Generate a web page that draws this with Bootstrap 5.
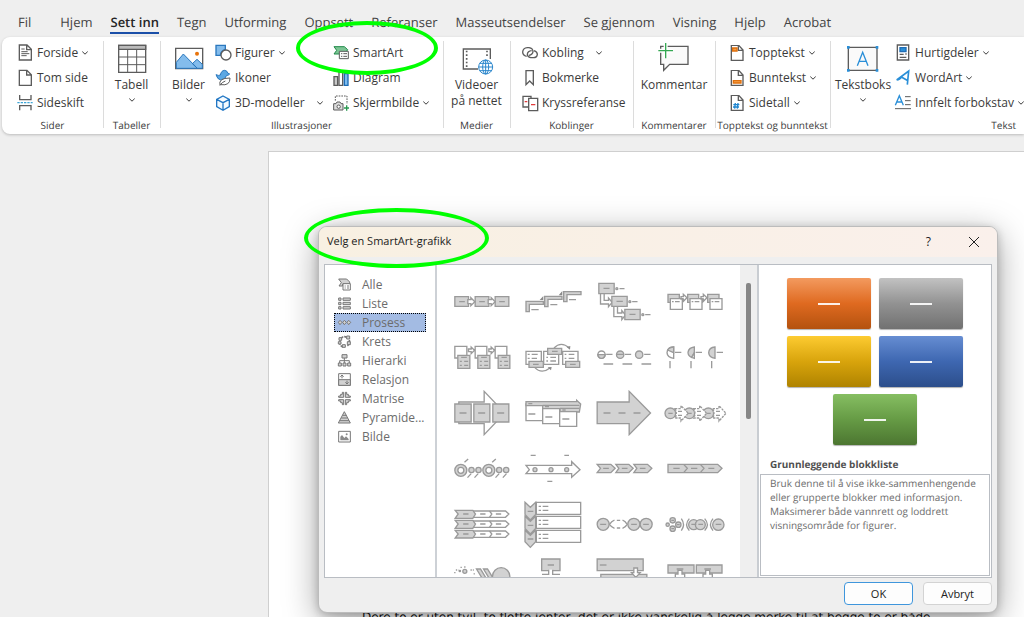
<!DOCTYPE html>
<html lang="nb">
<head>
<meta charset="utf-8">
<meta name="viewport" content="width=device-width, initial-scale=1">
<title>Velg en SmartArt-grafikk</title>
<link href="https://cdn.jsdelivr.net/npm/bootstrap@5.3.0/dist/css/bootstrap.min.css" rel="stylesheet">
<style>
  body { background: #efefef; color: #3b3b3b; font-family: "Open Sans", "Noto Sans", sans-serif; font-size: 12px; line-height: 16px; height: 100vh; text-rendering: geometricPrecision; }
  button { font: inherit; color: inherit; background: none; border: 0; padding: 0; }
  svg { overflow: visible; flex: none; display: block; }

  .tabs { height: 37px; padding: 11px 0 0 18px; gap: 18px; font-size: 13px; }
  .tabs a { color: #444; text-decoration: none; line-height: 22px; height: 23px; white-space: nowrap; }
  .tabs li:first-child { margin-right: 11px; }
  .tabs a.active { color: #262626; font-weight: 600; border-bottom: 2px solid #1b4fa8; }

  .ribbon { background: #fff; margin-left: 2px; height: 97px; border-radius: 8px 0 0 8px; box-shadow: 0 1px 3px rgba(0,0,0,.22); }
  .group { flex: none; padding-top: 3px; position: relative; }
  .group + .group::before { content: ""; position: absolute; left: 0; top: 4px; bottom: 6px; width: 1px; background: #dcdcdc; }
  .group-body { height: 75px; }
  .caption { font-size: 10px; line-height: 20px; text-align: center; white-space: nowrap; }
  .cmd { display: flex; align-items: center; height: 25px; gap: 4px; white-space: nowrap; }
  .cmd .far { margin-left: 8px; }
  .big { display: flex; flex-direction: column; align-items: center; padding-top: 3px; height: 75px; text-align: center; white-space: nowrap; }
  .big span { margin-top: 2px; }
  .big .chev { margin-top: 5px; }
  .chev { width: 6px; height: 4px; fill: none; stroke: #3b3b3b; stroke-width: 1; }
  .w-sider { width: 101px; } .w-tabell { width: 57px; } .w-illu { width: 283px; } .w-medier { width: 67px; }
  .w-kobl { width: 123px; } .w-komm { width: 82px; } .w-topp { width: 115px; }
  .w-tekst { flex: 1 1 0; min-width: 0; }
  .col-a { width: 118px; }
  .big-w { width: 57px; }
  .ico { width: 16px; height: 16px; fill: none; stroke: #5c5c5c; stroke-width: 4; }
  .ico-lg { width: 32px; height: 32px; fill: none; stroke: #5c5c5c; stroke-width: 4; }

  .sheet { margin: 17px 0 0 268px; background: #fff; border: solid #cfcfcf; border-width: 1px 0 0 1px; padding: 456px 0 0 93px; font-family: "DejaVu Sans", sans-serif; color: #111; line-height: 18px; white-space: nowrap; }

  .smart { position: absolute; left: 318px; right: 26px; top: 226px; background: #efefef; border: 1px solid #bcbcbc; border-radius: 9px; overflow: hidden; padding-bottom: 7px; }
  .smart-shadow { box-shadow: 0 8px 34px rgba(0,0,0,.36), 0 2px 8px rgba(0,0,0,.2); }
  .smart-head { height: 30px; background: linear-gradient(90deg, #f8f0e2, #faf0eb); padding: 0 18px 0 8px; color: #1c1c1c; font-size: 11px; }
  .smart-head .btns { gap: 38px; font-size: 12px; }
  .panes { margin: 7px 5px 0; height: 314px; background: #fff; border: 1px solid #b9bdc3; }
  .kinds { width: 112px; padding: 10px 9px 0 9px; border-right: 2px solid #cdd1d6; font-size: 12px; color: #6c6c6c; }
  .kinds button { display: flex; align-items: center; height: 19px; width: 92px; padding-left: 3px; gap: 11px; border: 1px dotted transparent; white-space: nowrap; text-align: left; }
  .kinds button.active { background: #a3bbe3; border: 1px dotted #000; }
  .kinds svg { width: 13px; height: 13px; fill: none; stroke: #777; stroke-width: 3; }
  .gallery { display: grid; grid-template-columns: repeat(4, 1fr); grid-auto-rows: 56px; padding: 8px 9px 0; overflow: hidden; }
  .gallery button { display: flex; justify-content: center; }
  .gallery svg { width: 70px; height: 56px; fill: none; stroke: #9a9a9a; stroke-width: 4; }
  .f { fill: #d2d2d2; } .w { fill: #fff; }
  .k { fill: #8a8a8a; stroke: none; }
  .bar { width: 17px; background: #efefef; padding: 18px 0 0 6px; }
  .thumb { width: 5px; height: 136px; background: #868686; border-radius: 2px; }
  .preview { width: 234px; border-left: 2px solid #c9cdd2; padding: 13px 1px 1px; }
  .blocks { display: flex; flex-wrap: wrap; justify-content: center; gap: 7px 8px; padding: 0 26px; }
  .block-item { width: 84px; height: 51px; border-radius: 2px; display: flex; align-items: center; justify-content: center; box-shadow: 0 1px 1px rgba(0,0,0,.3); }
  .block-item::after { content: ""; width: 22px; height: 2px; background: #fff; opacity: .9; }
  .b1 { background: linear-gradient(#f39a5f, #df6a20 50%, #b4520f); }
  .b2 { background: linear-gradient(#c2c2c2, #929292 50%, #717171); }
  .b3 { background: linear-gradient(#fdcb31, #d8a40c 50%, #af8300); }
  .b4 { background: linear-gradient(#668dd2, #3e67b1 50%, #2c4e8b); }
  .b5 { background: linear-gradient(#86be62, #669b45 50%, #4c7631); }
  .preview h2 { font-size: 10px; line-height: 16px; font-weight: 700; color: #505050; margin: 11px 0 2px 10px; }
  .desc { border: 1px solid #b9bdc3; padding: 1px 8px 0 9px; font-size: 10px; line-height: 14px; color: #6c6c6c; margin: 0; }
  .foot { padding: 4px 5px 0; gap: 10px; font-size: 11px; }
  .foot button { width: 69px; height: 23px; border-radius: 4px; border: 1px solid #d3d3d3; background: #fdfdfd; color: #222; }
  .foot button.main { border-color: #3f96dc; }
  .ring { position: absolute; border-style: solid; border-color: #0f0; border-radius: 50%; pointer-events: none; }
  .ring-a { left: 296px; top: 21px; width: 142px; height: 54px; border-width: 4px; }
  .ring-b { left: 304px; top: 208px; width: 185px; height: 60px; border-width: 4px; }
</style>
</head>
<body class="position-relative overflow-hidden">
<svg width="0" height="0" class="position-absolute" aria-hidden="true">
  <symbol id="chev" viewBox="0 0 6 4"><path d="M.3.6 3 3.2 5.700.6"/></symbol>
  <symbol id="page" viewBox="0 0 48 48"><path class="w" d="M7 1h22l13 14v31H7zM28 1v15h14"/></symbol>
</svg>

<nav>
  <ul class="tabs d-flex list-unstyled mb-0">
    <li><a href="#">Fil</a></li><li><a href="#">Hjem</a></li><li><a href="#" class="active d-block">Sett inn</a></li><li><a href="#">Tegn</a></li><li><a href="#">Utforming</a></li><li><a href="#">Oppsett</a></li><li><a href="#">Referanser</a></li><li><a href="#">Masseutsendelser</a></li><li><a href="#">Se gjennom</a></li><li><a href="#">Visning</a></li><li><a href="#">Hjelp</a></li><li><a href="#">Acrobat</a></li>
  </ul>
</nav>

<div class="ribbon d-flex">
  <section class="group w-sider">
    <div class="group-body" style="padding-left:15px">
      <button class="cmd"><svg class="ico" viewBox="51 133 48 48"><path class="w" d="M58 133h23l13 13v32H58zM80 133v14h14"/><path d="M64 145h10M64 153h19M64 159h24M64 165h16" stroke-width="3"/></svg>Forside <svg class="chev"><use href="#chev"/></svg></button>
      <button class="cmd"><svg class="ico" viewBox="51 208 48 48"><path class="w" d="M58 209h23l13 13v32H58zM80 209v14h14"/></svg>Tom side</button>
      <button class="cmd"><svg class="ico" viewBox="51 283 48 48"><path d="M59 283v14h34v-14M59 329v-14h34v14"/><path d="M52 306h46" stroke="#3fa7d8" stroke-dasharray="7 3"/></svg>Sideskift</button>
    </div>
    <div class="caption">Sider</div>
  </section>

  <section class="group w-tabell">
    <button class="big w-100"><svg class="ico-lg" viewBox="348 129 96 96"><path class="w" d="M356 136h81v81h-81z"/><path d="M356 136h81v12h-81z" fill="#bbb"/><path d="M356 171h81M356 194h81M383 148v69M410 148v69" stroke-width="3"/></svg><span>Tabell</span><svg class="chev"><use href="#chev"/></svg></button>
    <div class="caption">Tabeller</div>
  </section>

  <section class="group w-illu">
    <div class="group-body d-flex">
      <button class="big big-w"><svg class="ico-lg" viewBox="519 129 96 96"><path class="w" d="M527 145h81v61h-81z"/><path d="M529 187l21-25 42 43h-63zM577 191l14-13 16 15v12h-15z" fill="#83bcec" stroke="#2a77bd" stroke-width="3"/><circle cx="591" cy="161" r="6" fill="#e8740c" stroke="none"/></svg><span>Bilder</span><svg class="chev"><use href="#chev"/></svg></button>
      <div class="col-a" style="margin-left:-2px">
        <button class="cmd"><svg class="ico" viewBox="645 133 48 48"><path d="M648 134h28v12q-14 4-15 18h-13z" fill="#83bcec" stroke="#2a77bd"/><circle class="w" cx="678" cy="163" r="15"/></svg>Figurer <svg class="chev"><use href="#chev"/></svg></button>
        <button class="cmd"><svg class="ico" viewBox="645 208 48 48"><path d="M648 222q8 4 13 1 3-14 13-14 8 1 9 8l6 3q-4 5-9 4-3 12-18 14-10-2-14-16z" fill="#5ba7e3" stroke="#2a77bd" stroke-width="3"/><path class="w" d="M660 254q-6-22 30-22 1 24-28 20M660 254q6-10 16-13" stroke-width="3"/></svg>Ikoner</button>
        <button class="cmd"><svg class="ico" viewBox="645 283 48 48"><path d="M669 286l19 10v22l-19 11-19-11v-22zM650 296l19 10 19-10M669 306v22" fill="#f3faff" stroke="#2277c4"/></svg>3D-modeller <svg class="chev far"><use href="#chev"/></svg></button>
      </div>
      <div>
        <button class="cmd"><svg class="ico" viewBox="129 133 48 48"><path d="M132 138h31l10 9-8 13h-33l8-11z" fill="#7cc594" stroke="#218a4a" stroke-width="3"/><path class="w" d="M148 152h27v22h-27zM153 159h4M160 159h11M153 167h4M160 167h11" stroke-width="3"/></svg>SmartArt</button>
        <button class="cmd"><svg class="ico" viewBox="129 208 48 48"><path d="M132 228h11v26h-11z" fill="#c9c9c9"/><path class="w" d="M147 212h11v42h-11z"/><path d="M163 219h11v35h-11z" fill="#7cbbee" stroke="#1d6cb5"/></svg>Diagram</button>
        <button class="cmd"><svg class="ico" viewBox="129 283 48 48"><path d="M136 300v-14h35v24" stroke-dasharray="5 3" stroke-width="3"/><path d="M131 309h7l3-5h9l3 5h6v19h-28z" fill="#ddd" stroke-width="3"/><circle class="w" cx="146" cy="318" r="5" stroke-width="3"/><path d="M170 314v16M162 322h15" stroke="#2a9a52"/></svg>Skjermbilde <svg class="chev"><use href="#chev"/></svg></button>
      </div>
    </div>
    <div class="caption">Illustrasjoner</div>
  </section>

  <section class="group w-medier">
    <button class="big w-100"><svg class="ico-lg" viewBox="513 129 96 96"><path class="w" stroke="none" d="M521 147h80v60h-80z"/><path d="M564 207h-44v-60h81v30"/><path d="M530 152v52M591 152v22" stroke-dasharray="5 6" stroke-width="5"/><g stroke="#2a86cc" stroke-width="3"><circle class="w" cx="587" cy="201" r="21"/><ellipse cx="587" cy="201" rx="9" ry="21"/><path d="M587 180v42M566 201h42M569 190h36M569 212h36"/></g></svg><span>Videoer<br>på nettet</span></button>
    <div class="caption">Medier</div>
  </section>

  <section class="group w-kobl">
    <div class="group-body" style="padding-left:12px">
      <button class="cmd"><svg class="ico" viewBox="699 133 48 48"><path d="M713 167q-12-3-12-13 1-12 14-13h5q12 2 12 12-1 9-12 11"/><path d="M735 150q10 4 10 11-1 10-12 10h-8q-10-2-10-10 1-10 13-11"/></svg>Kobling <svg class="chev far"><use href="#chev"/></svg></button>
      <button class="cmd"><svg class="ico" viewBox="699 208 48 48"><path class="w" d="M711 210h22v42l-11-11-11 11z"/></svg>Bokmerke</button>
      <button class="cmd"><svg class="ico" viewBox="699 283 48 48"><path class="w" d="M719 319h-17v-32h24v6"/><path class="w" d="M719 293h27v37h-27z"/><path d="M707 303h8M726 312h13" stroke="#e33b3b"/></svg>Kryssreferanse</button>
    </div>
    <div class="caption">Koblinger</div>
  </section>

  <section class="group w-komm">
    <button class="big w-100"><svg class="ico-lg" viewBox="87 129 96 96"><path d="M95 139h82v54h-55l-18 18v-18h-9z" fill="#fafafa"/><path d="M110 127v48M87 152h45" stroke="#fff" stroke-width="12"/><path d="M110 129v46M88 152h44" stroke="#35a853"/></svg><span>Kommentar</span></button>
    <div class="caption">Kommentarer</div>
  </section>

  <section class="group w-topp">
    <div class="group-body" style="padding-left:14px">
      <button class="cmd"><svg class="ico"><use href="#page"/><path transform="scale(.333)" d="M11 9h13v9H11z" fill="#f5a04a" stroke="#e0700c"/></svg>Topptekst <svg class="chev"><use href="#chev"/></svg></button>
      <button class="cmd"><svg class="ico"><use href="#page"/><path transform="scale(.333)" d="M13 32h23v7H13z" fill="#f5a04a" stroke="#e0700c"/></svg>Bunntekst <svg class="chev"><use href="#chev"/></svg></button>
      <button class="cmd"><svg class="ico"><use href="#page"/><path transform="scale(.333)" d="M19 24l-2 17M27 24l-2 17M13 29h18M12 36h18" stroke="#1f86d0"/></svg>Sidetall <svg class="chev"><use href="#chev"/></svg></button>
    </div>
    <div class="caption">Topptekst og bunntekst</div>
  </section>

  <section class="group w-tekst">
    <div class="group-body d-flex">
      <button class="big" style="width:70px"><svg class="ico-lg" viewBox="663 129 96 96"><path d="M667 142h86v69h-86z" fill="#fafafa"/><path d="M694 197l16-40 16 40M699 184h22" stroke="#2a8fd8"/><path d="M663 138h8v8h-8zM749 138h8v8h-8zM663 207h8v8h-8zM749 207h8v8h-8z" fill="#2a8fd8" stroke="none"/></svg><span>Tekstboks</span><svg class="chev"><use href="#chev"/></svg></button>
      <div style="margin-left:-1px">
        <button class="cmd"><svg class="ico" viewBox="810 133 48 48"><path class="w" d="M817 133h34v45h-34z"/><path d="M825 141h18v12h-18z" fill="#2a8fd8" stroke="#1f6cb5"/><path d="M824 161h12M824 170h20M841 160h4"/></svg>Hurtigdeler <svg class="chev"><use href="#chev"/></svg></button>
        <button class="cmd"><svg class="ico" viewBox="810 208 48 48"><path d="M815 238l36-27-4 41M829 229l20 11M815 238q10 0 14-9" stroke="#2a8fd8" stroke-width="5"/></svg>WordArt <svg class="chev"><use href="#chev"/></svg></button>
        <button class="cmd"><svg class="ico" viewBox="810 283 48 48"><path d="M811 314l12-29 12 29M815 304h16" stroke="#2a8fd8"/><path d="M840 288h17M840 300h17M840 312h17M810 324h48" stroke-width="3"/></svg>Innfelt forbokstav <svg class="chev"><use href="#chev"/></svg></button>
      </div>
    </div>
    <div class="caption text-end pe-2">Tekst</div>
  </section>
</div>

<main class="sheet">Dere to er uten tvil, to flotte jenter, det er ikke vanskelig å legge merke til at begge to er både</main>

<div class="smart smart-shadow" role="dialog" aria-labelledby="dlg">
  <header class="smart-head d-flex align-items-center justify-content-between">
    <span id="dlg">Velg en SmartArt-grafikk</span>
    <div class="btns d-flex align-items-center">
      <button>?</button>
      <button aria-label="Lukk"><svg width="10" height="10" viewBox="0 0 10 10" stroke="#222" stroke-width="1"><path d="M0 0l10 10M10 0L0 10"/></svg></button>
    </div>
  </header>

  <div class="panes d-flex">
    <div class="kinds flex-shrink-0">
      <button><svg viewBox="0 0 39 39"><path class="f" d="M2 3h24l9 9v6H14v6H3l7-10z"/><path class="w" d="M15 17h22v19H15zM20 24h3M27 24h6M20 30h3M27 30h6"/></svg>Alle</button>
      <button><svg viewBox="0 0 39 39"><path class="f" d="M2 3h7v7H2zM2 16h7v7H2zM2 29h7v7H2zM15 3h22v7H15zM15 16h22v7H15zM15 29h22v7H15z"/></svg>Liste</button>
      <button class="active"><svg viewBox="0 0 39 39"><path class="f" d="M1 19l5-6 6 6-6 7zM14 19l5-6 6 6-6 7zM27 19l5-6 6 6-6 7z"/></svg>Prosess</button>
      <button><svg viewBox="0 0 39 39"><path d="M9 10q9-10 20-1M34 15q2 12-7 18M15 36Q4 32 5 19" stroke-dasharray="8 3" stroke-width="5"/><path class="f" d="M3 8h8v8H3zM26 3h9v9h-9zM28 20h9v9h-9zM13 29h9v8h-9zM1 20h8v7H1z"/></svg>Krets</button>
      <button><svg viewBox="0 0 39 39"><path class="f" d="M12 2h15v10H12zM1 27h9v9H1zM15 27h9v9h-9zM29 27h9v9h-9z"/><path d="M19 12v15M5 27v-7h29v7"/></svg>Hierarki</button>
      <button><svg viewBox="0 0 39 39"><path class="w" d="M2 2h35v35H2z"/><path class="f" d="M2 20h35v17H2z"/><path d="M12 16V6M7 11l5-5 5 5M27 23v10M22 28l5 5 5-5"/></svg>Relasjon</button>
      <button><svg viewBox="0 0 39 39"><path class="f" d="M17 1v15H2v-4h6V7h5V1zM22 1v15h15v-4h-6V7h-5V1zM17 38V23H2v4h6v5h5v6zM22 38V23h15v4h-6v5h-5v6z"/></svg>Matrise</button>
      <button><svg viewBox="0 0 39 39"><path class="f" d="M19 2l18 34H1zM14 13h11M10 21h19M6 29h27"/></svg>Pyramide...</button>
      <button><svg viewBox="0 0 39 39"><path class="w" d="M2 4h35v32H2z"/><path class="k" d="M7 31V20l5-5 7 9 5-5 8 8v4z"/><circle class="k" cx="26" cy="13" r="3"/></svg>Bilde</button>
    </div>

    <div class="gallery flex-grow-1">
      <button><svg viewBox="19.500 9 210 168"><path class="f" d="M43 80h41v29H43zM104 80h41v29h-41zM164 80h41v29h-41z"/><path class="w" d="M82 89h9v-6l12 12-12 12v-6h-9zM143 89h9v-6l12 12-12 12v-6h-9z"/><path d="M56 95h17M116 95h17M176 95h17"/></svg></button>
      <button><svg viewBox="234 9 210 168"><path class="f" d="M258 94h52v9h-42v22h-10zM314 79h52v9h-42v22h-10zM371 65h52v9h-42v21h-10z"/><path class="k" d="M299 90l11-12v12zM356 76l11-13v13z"/><path d="M274 119h22M331 104h21M387 89h21"/></svg></button>
      <button><svg viewBox="-1.500 9 210 168"><path class="w" d="M33 70v32h24v8l11-13-11-13v7H44V70zM73 109v31h24v9l11-14-11-13v7H84v-20z"/><path class="f" d="M28 40h46v31H28zM67 79h46v30H67zM106 118h46v31h-46z"/><path d="M42 55h18M81 94h19M120 133h18M90 56h15M128 95h16M167 134h16"/><circle class="f" cx="82" cy="56" r="3"/><circle class="f" cx="121" cy="95" r="3"/><circle class="f" cx="160" cy="134" r="3"/></svg></button>
      <button><svg viewBox="213 9 210 168"><path class="f" d="M237 73h34v24h-34zM296 73h33v24h-33zM356 73h34v24h-34z"/><path class="w" d="M276 80h7v-7l11 10-11 11v-7h-7zM336 80h7v-7l11 10-11 11v-7h-7zM244 86h36v32h-36zM303 86h36v32h-36zM363 86h36v32h-36z"/><path d="M249 95h5M258 95h14M308 95h5M317 95h14M368 95h5M377 95h14"/></svg></button>

      <button><svg viewBox="19.500 177 210 168"><path class="w" d="M43 229h36v35H43zM104 229h35v35h-35zM164 229h35v35h-35zM84 237h8v-6l10 10-10 10v-6h-8zM145 237h7v-6l10 10-10 10v-6h-7z"/><path class="f" d="M52 256h36v39H52zM112 256h36v39h-36zM173 256h35v39h-35z"/><path d="M62 262h17M71 274h12M71 286h12M122 262h17M131 274h12M131 286h12M183 262h16M191 274h12M191 286h12M58 274h6M58 286h6M118 274h6M118 286h6M178 274h6M178 286h6"/></svg></button>
      <button><svg viewBox="234 177 210 168"><path class="w" d="M258 244h46v39h-46zM311 244h45v39h-45zM368 244h46v39h-46z"/><path class="f" d="M267 274h43v18h-43zM323 235h42v18h-42zM377 274h42v18h-42z"/><path d="M275 253h18M275 265h16M331 262h17M331 273h17M386 253h17M386 265h17M279 283h17M336 244h17M390 283h17M263 253h6M263 265h6M319 262h5M319 273h5M374 253h5M374 265h5M284 292q20 22 46 2M342 234q21-22 46 0"/><path class="k" d="M323 292l12-1-2 10zM380 231l11-3-1 11z"/></svg></button>
      <button><svg viewBox="-1.500 177 210 168"><circle class="w" cx="36" cy="254" r="11"/><path class="f" d="M25 254h22q-2 11-11 11t-11-11z"/><circle class="f" cx="92" cy="254" r="11"/><path d="M81 253h22M50 253h19M106 253h19M164 253h19M42 282h29M99 282h29M156 282h29"/><circle class="f" cx="149" cy="254" r="11"/></svg></button>
      <button><svg viewBox="213 177 210 168"><path class="w" d="M254 231v34q-19-2-20-17 1-16 20-17z"/><path class="f" d="M254 231v17l-18-8q5-9 18-9zM316 231v17l-8 14q-11-4-11-15 2-14 19-16zM378 231v34q-18-2-19-17 1-16 19-17z"/><path class="w" d="M308 262l8-14v17z"/><path d="M258 247h19M320 247h19M383 247h19M243 273v22M306 273v22M368 273v22"/></svg></button>

      <button><svg viewBox="19.500 345 210 168"><path class="w" d="M55 396h76v-32l62 65-62 65v-33H55z"/><path class="f" d="M43 402h49v54H43zM100 402h48v54h-48zM157 402h48v54h-48z"/><path d="M57 429h21M113 429h21M170 429h21"/></svg></button>
      <button><svg viewBox="234 345 210 168"><path class="w" d="M258 402h51v50h-51z"/><path class="f" d="M258 395h152v-4l12 11-4 24H360v-7H308v-12H258z"/><path class="w" d="M308 416h51v45h-51zM359 425h51v44h-51z"/><path d="M265 401h12M315 410h12M308 406h110M360 415h58M367 420h10M265 432h21M316 441h21M367 447h21"/></svg></button>
      <button><svg viewBox="-1.500 345 210 168"><path class="f" d="M23 396h96v-32l64 65-64 65v-33H23z"/><path d="M42 429h21M87 429h21M132 429h21"/></svg></button>
      <button><svg viewBox="213 345 210 168"><circle class="f" cx="244" cy="430" r="16"/><circle class="f" cx="301" cy="430" r="16"/><circle class="f" cx="358" cy="430" r="16"/><path class="w" stroke-dasharray="7 3" d="M258 416h18v-9l22 23-22 23v-9h-18q8-13 0-28zM314 416h18v-9l21 23-21 23v-9h-18q8-13 0-28zM371 416h19v-9l21 23-21 23v-9h-19q8-13 0-28z"/><path d="M238 430h13M295 430h13M352 430h13M267 424h12M267 436h12M324 424h12M324 436h12M381 424h12M381 436h12"/></svg></button>

      <button><svg viewBox="19.500 3 210 168"><circle class="f" cx="61" cy="91" r="18"/><circle class="w" cx="61" cy="91" r="9"/><circle class="f" cx="145" cy="91" r="18"/><circle class="w" cx="145" cy="91" r="9"/><circle class="f" cx="93" cy="90" r="8"/><circle class="f" cx="114" cy="90" r="8"/><circle class="f" cx="176" cy="90" r="8"/><circle class="f" cx="197" cy="90" r="8"/><path d="M72 67l11-10M155 67l11-10M81 113l11-12M102 113l11-12M165 113l11-12M187 113l11-12"/></svg></button>
      <button><svg viewBox="234 3 210 168"><path class="w" d="M258 76h137V65l25 24-25 23v-11H258l10-12z"/><path d="M272 46h15M373 46h14M322 124h15"/><g class="f"><circle cx="285" cy="89" r="6"/><circle cx="333" cy="89" r="6"/><circle cx="380" cy="89" r="6"/></g></svg></button>
      <button><svg viewBox="-1.500 3 210 168"><path class="f" d="M23 73h41l13 12-13 13H23l10-13zM79 73h39l13 12-13 13H79l9-13zM133 73h41l13 12-13 13h-41l9-13z"/><path d="M41 85h17M97 85h17M151 85h17"/></svg></button>
      <button><svg viewBox="213 3 210 168"><path class="f" d="M237 73h149l13 12-13 13H237z"/><path d="M284 73l11 12-11 13M334 73l11 12-11 13M253 85h19M306 85h19M358 85h18"/></svg></button>

      <button><svg viewBox="19.500 171 210 168"><path class="w" d="M97 213h98l10 9-10 10H97zM97 243h98l10 9-10 10H97zM97 273h98l10 9-10 10H97z"/><path class="f" d="M44 211h53l8 11-8 13H44l9-13zM44 241h53l8 11-8 13H44l9-13zM44 271h53l8 11-8 12H44l9-12z"/><path d="M68 222h16M119 222h16M166 222h16M68 252h16M119 252h16M166 252h16M68 282h16M119 282h16M166 282h16M147 213l7 9-7 10M147 243l7 9-7 10M147 273l7 9-7 10"/></svg></button>
      <button><svg viewBox="234 171 210 168"><path class="w" d="M289 187h133v36H289zM289 229h133v36H289zM289 271h133v36H289z"/><path class="f" d="M255 187l16 15 16-15v36l-16 17-16-17zM255 229l16 15 16-15v36l-16 17-16-17zM255 271l16 15 16-15v34l-16 17-16-17z"/><path d="M308 199h17M308 211h17M308 241h17M308 253h17M308 283h17M308 295h17M296 199h7M296 211h7M296 241h7M296 253h7M296 283h7M296 295h7M263 214h17M263 256h17M263 297h17"/></svg></button>
      <button><svg viewBox="-1.500 171 210 168"><circle class="f" cx="41" cy="253" r="18"/><circle class="f" cx="133" cy="253" r="18"/><circle class="f" cx="170" cy="253" r="18"/><path d="M32 253h18M125 253h17M161 253h17M75 240q-9 4-15 13 6 9 15 12M99 240q9 4 14 13-5 9-14 12M82 241h10M82 264h10"/></svg></button>
      <button><svg viewBox="213 171 210 168"><g class="f"><circle cx="236" cy="254" r="5"/><circle cx="251" cy="241" r="8"/><circle cx="251" cy="266" r="8"/><circle cx="268" cy="254" r="8"/><circle cx="314" cy="254" r="15"/><circle cx="334" cy="254" r="15"/><circle cx="388" cy="254" r="17"/></g><path d="M277 236q13 18 0 36M301 236q-16 18 0 36M347 236q16 18 0 36M372 236q-15 18 0 36M307 253h15M328 253h14M380 253h17M247 241h8M247 266h8M264 254h8"/></svg></button>

      <button><svg viewBox="19.500 339 210 168"><path d="M43 400v-4M46 390h8M60 382h5M71 381h7M90 390h10M100 400l4 6" stroke-dasharray="4 3"/><circle class="f" cx="73" cy="394" r="6"/><circle class="f" cx="58" cy="393" r="2"/><path class="f" d="M108 387h12l22 36h-12zM129 387h12l22 36h-12z"/><circle class="f" cx="182" cy="409" r="26"/></svg></button>
      <button><svg viewBox="234 339 210 168"><path class="f" d="M305 357h55v35h-55z"/><path class="w" stroke="none" d="M326 389h12v34h-12z"/><path d="M326 389v14h-20M338 389v14h22M323 375h19"/></svg></button>
      <button><svg viewBox="-1.500 339 210 168"><path class="f" d="M23 357h138v35H23zM34 403h138v20H34z"/><path class="w" d="M133 384h11v14h8l-13 14-13-14h7z"/><path d="M31 375h20"/></svg></button>
      <button><svg viewBox="213 339 210 168"><path class="f" d="M237 375h78v24h-78zM322 375h77v24h-77z"/><path class="w" d="M267 391h12v11h8v20h-28v-20h8zM350 391h12v11h8v20h-28v-20h8z"/><path d="M263 387h20M346 387h20"/></svg></button>
    </div>

    <div class="bar flex-shrink-0"><div class="thumb"></div></div>

    <section class="preview flex-shrink-0 d-flex flex-column">
      <div class="blocks">
        <div class="block-item b1"></div><div class="block-item b2"></div><div class="block-item b3"></div><div class="block-item b4"></div><div class="block-item b5"></div>
      </div>
      <h2>Grunnleggende blokkliste</h2>
      <p class="desc flex-grow-1">Bruk denne til å vise ikke-sammenhengende eller grupperte blokker med informasjon. Maksimerer både vannrett og loddrett visningsområde for figurer.</p>
    </section>
  </div>

  <footer class="foot d-flex justify-content-end">
    <button class="main">OK</button>
    <button>Avbryt</button>
  </footer>
</div>

<div class="ring ring-a"></div>
<div class="ring ring-b"></div>
<script src="https://cdn.jsdelivr.net/npm/bootstrap@5.3.0/dist/js/bootstrap.bundle.min.js"></script>
</body>
</html>
